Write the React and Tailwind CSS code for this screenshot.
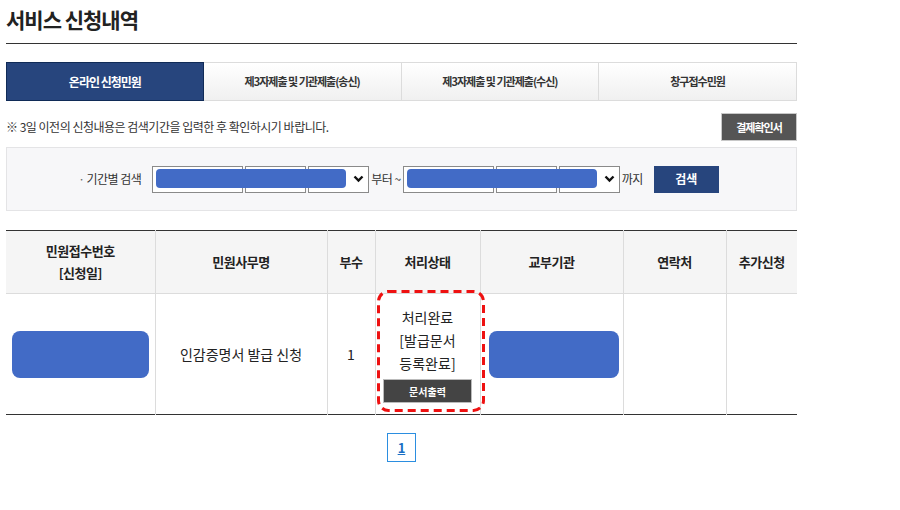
import React from "react";

const tabs = ["온라인 신청민원", "제3자제출 및 기관제출(송신)", "제3자제출 및 기관제출(수신)", "창구접수민원"];
const headers = [
    { label: ["민원접수번호", "[신청일]"], w: "w-[149px]" },
    { label: ["민원사무명"], w: "w-[172px]" },
    { label: ["부수"], w: "w-[48px]" },
    { label: ["처리상태"], w: "w-[105px]" },
    { label: ["교부기관"], w: "w-[143px]" },
    { label: ["연락처"], w: "w-[103px]" },
    { label: ["추가신청"], w: "w-[71px]" },
];

function DateGroup() {
    return (
        <div className="relative flex items-center gap-[2px]">
            <input className="w-[91px] h-[27px] border border-[#8a8a8a] bg-white" />
            <input className="w-[61px] h-[27px] border border-[#8a8a8a] bg-white" />
            <div className="w-[61px] h-[27px] border border-[#8a8a8a] bg-white flex items-center justify-end pr-[4px]">
                <svg width="11" height="8" viewBox="0 0 11 8">
                    <path d="M1.5 1.5 L5.5 5.5 L9.5 1.5" fill="none" stroke="#111" strokeWidth="2.4" />
                </svg>
            </div>
            {/* masked value */}
            <div className="absolute left-[4px] top-[3px] w-[190px] h-[19px] rounded-[4px] bg-[#426bc6]" />
        </div>
    );
}

export default function App() {
    return (
        <div className="w-[900px] h-[510px] bg-white text-[#222]" style={{ fontFamily: '"Noto Sans CJK KR", "Noto Sans", sans-serif' }}>
            <div className="ml-[6px] w-[791px] pt-[4px]">
                <h1 className="text-[21px] font-bold leading-[30px] tracking-[-1px] text-[#222]">서비스 신청내역</h1>
                <div className="mt-[9px] h-px bg-[#333]" />

                {/* tabs */}
                <div className="mt-[18px] grid grid-cols-4 h-[39px]">
                    {tabs.map((t, i) => (
                        i === 0 ? (
                            <div key={t} className="flex items-center justify-center bg-[#27457d] border border-[#102b57] text-white text-[12px] font-bold tracking-[-1px]">{t}</div>
                        ) : (
                            <div key={t} className="flex items-center justify-center bg-gradient-to-b from-white to-[#f0f0f0] border border-l-0 border-[#dcdcdc] text-[#333] text-[11px] font-bold tracking-[-1px]">{t}</div>
                        )
                    ))}
                </div>

                {/* notice */}
                <div className="mt-[12px] flex items-center justify-between">
                    <p className="text-[12px] tracking-[-0.5px] text-[#333]">※ 3일 이전의 신청내용은 검색기간을 입력한 후 확인하시기 바랍니다.</p>
                    <button className="w-[76px] h-[28px] bg-[#555] border border-[#c8c8c8] text-white text-[11px] font-bold tracking-[-1px]">결제확인서</button>
                </div>

                {/* search box */}
                <div className="mt-[6px] h-[64px] bg-[#f7f7f9] border border-[#e4e4e6] flex items-center justify-center pr-[6px] text-[12px] text-[#333]">
                    <span className="mr-[11px] tracking-[-0.5px]"><span className="text-[#666] mr-[2px]">·</span>기간별 검색</span>
                    <DateGroup />
                    <span className="mx-[2px] tracking-[-0.5px]">부터 ~</span>
                    <DateGroup />
                    <span className="ml-[2px] tracking-[-0.5px]">까지</span>
                    <button className="ml-[11px] w-[65px] h-[27px] bg-[#27457d] text-white text-[12px] font-bold">검색</button>
                </div>

                {/* table */}
                <div className="relative mt-[19px]">
                    <table className="w-full border-collapse table-fixed">
                        <thead>
                            <tr className="border-t border-[#333]">
                                {headers.map((h, i) => (
                                    <th key={i} className={`${h.w} h-[63px] bg-[#f5f5f5] border-b border-[#dcdcdc] ${i > 0 ? "border-l" : ""} border-l-[#dcdcdc] text-[13px] font-bold leading-[22px] tracking-[-0.5px] text-[#222]`}>
                                        {h.label.map((l) => <div key={l}>{l}</div>)}
                                    </th>
                                ))}
                            </tr>
                        </thead>
                        <tbody>
                            <tr className="border-b border-[#333] text-[14px]">
                                <td className="h-[121px] px-[6px]">
                                    <div className="h-[47px] rounded-[8px] bg-[#426bc6]" />
                                </td>
                                <td className="border-l border-[#dcdcdc] text-center">인감증명서 발급 신청</td>
                                <td className="border-l border-[#dcdcdc] text-center">1</td>
                                <td className="border-l border-[#dcdcdc] text-center">
                                    <div className="leading-[23px] pt-[1px]">
                                        <div>처리완료</div>
                                        <div>[발급문서</div>
                                        <div>등록완료]</div>
                                    </div>
                                    <button className="mt-[4px] w-[89px] h-[24px] bg-[#444] border border-[#bbb] text-white text-[10px] font-bold">문서출력</button>
                                </td>
                                <td className="border-l border-[#dcdcdc] px-[8px]">
                                    <div className="w-[130px] h-[47px] mx-auto rounded-[8px] bg-[#426bc6]" />
                                </td>
                                <td className="border-l border-[#dcdcdc]"></td>
                                <td className="border-l border-[#dcdcdc]"></td>
                            </tr>
                        </tbody>
                    </table>
                    {/* highlight annotation */}
                    <svg className="absolute left-[371px] top-[60px] pointer-events-none" width="108" height="122" viewBox="0 0 108 122">
                        <rect x="1.5" y="1.5" width="105" height="119" rx="10" fill="none" stroke="#ee1111" strokeWidth="3" strokeDasharray="8 5" />
                    </svg>
                </div>

                {/* pagination */}
                <div className="mt-[18px] flex justify-center">
                    <div className="w-[29px] h-[29px] border border-[#2b8ee0] flex items-center justify-center text-[13px] font-bold text-[#1a6fc4] underline">1</div>
                </div>
            </div>
        </div>
    );
}
